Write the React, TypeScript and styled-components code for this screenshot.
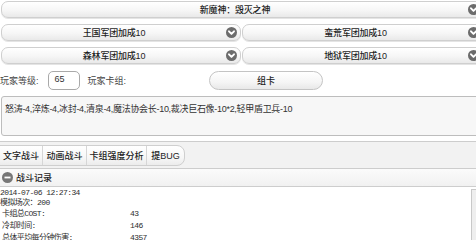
import * as React from "react";
import styled, { createGlobalStyle } from "styled-components";

const GlobalStyle = createGlobalStyle`
  html, body {
    margin: 0;
    padding: 0;
    background: #ffffff;
    overflow: hidden;
  }
  body {
    font-family: "Liberation Sans", "Noto Sans CJK SC", sans-serif;
    font-size: 9px;
    color: #222;
  }
`;

const SPage = styled.div`
  width: 482px;
  padding-top: 1px;
  display: flex;
  flex-direction: column;
`;

const SBarGrid = styled.div`
  display: grid;
  grid-template-columns: 240px 241px;
  gap: 6px 1px;
  margin-left: 1px;
`;

const SBar = styled.div<{ wide?: boolean }>`
  grid-column: ${({ wide }) => (wide ? "1 / span 2" : "auto")};
  height: 17px;
  box-sizing: border-box;
  display: flex;
  align-items: center;
  padding: 0 3px 0 0;
  border: 1px solid #cfcfcf;
  border-radius: 7px;
  background: linear-gradient(to bottom, #ffffff 0%, #f6f6f6 55%, #e9e9e9 100%);
  box-shadow: 0 1px 0 #e4e4e4;
`;

const SBarLabel = styled.div`
  flex: 1;
  text-align: center;
  font-weight: 500;
  color: #1e1e1e;
  letter-spacing: -0.2px;
`;

const SPlayerRow = styled.div`
  display: flex;
  align-items: center;
  height: 19px;
  margin-top: 7px;
`;

const SLabel = styled.span<{ gap: number }>`
  color: #444;
  margin-right: ${({ gap }) => gap}px;
`;

const SLevelInput = styled.div`
  width: 32px;
  height: 19px;
  box-sizing: border-box;
  border: 1px solid #a9a9a9;
  border-radius: 5px;
  padding: 2px 0 0 6px;
  color: #333;
  background: #fff;
  margin-right: 8px;
`;

const SDeckButton = styled.div`
  width: 114px;
  height: 19px;
  box-sizing: border-box;
  margin-left: 83px;
  border: 1px solid #c4c4c4;
  border-radius: 10px;
  background: linear-gradient(to bottom, #ffffff 0%, #f5f5f5 60%, #e8e8e8 100%);
  display: flex;
  align-items: center;
  justify-content: center;
  font-weight: 500;
  color: #1e1e1e;
`;

const SDeckText = styled.div`
  margin: 6px 0 0 1px;
  height: 40px;
  box-sizing: border-box;
  border: 1px solid #bdbdbd;
  border-radius: 3px;
  background: #f7f7f7;
  padding: 5px 0 0 3px;
  color: #333;
  letter-spacing: -0.3px;
  white-space: nowrap;
`;

const STabStrip = styled.div`
  margin-top: 5px;
  height: 28px;
  box-sizing: border-box;
  border-top: 1px solid #cdcdcd;
  border-bottom: 1px solid #cdcdcd;
  background: #f2f2f2;
  display: flex;
  align-items: center;
`;

const STabGroup = styled.div`
  display: flex;
  height: 19px;
  margin-left: -1px;
  border: 1px solid #cfcfcf;
  border-radius: 0 8px 8px 0;
  overflow: hidden;
  background: linear-gradient(to bottom, #ffffff 0%, #f7f7f7 60%, #ececec 100%);
`;

const STab = styled.div<{ w: number }>`
  width: ${({ w }) => w}px;
  box-sizing: border-box;
  display: flex;
  align-items: center;
  justify-content: center;
  font-weight: 500;
  color: #1e1e1e;
  border-right: 1px solid #d6d6d6;
  &:last-child {
    border-right: none;
  }
`;

const SSectionHead = styled.div`
  height: 18px;
  box-sizing: border-box;
  border-bottom: 1px solid #cdcdcd;
  background: linear-gradient(to bottom, #fbfbfb 0%, #f1f1f1 100%);
  display: flex;
  align-items: center;
  padding-left: 2px;
  gap: 3px;
  font-weight: 500;
  color: #1e1e1e;
`;

const SLogArea = styled.div`
  display: flex;
  width: 476px;
`;

const SLog = styled.div`
  flex: 1;
  padding-top: 1px;
  font-family: "Liberation Mono", "Noto Sans CJK SC", monospace;
  font-size: 8px;
  letter-spacing: -0.6px;
  color: #2e2e2e;
`;

const SLogLine = styled.div`
  height: 10px;
  line-height: 10px;
  white-space: nowrap;
`;

const SStatRow = styled.div`
  display: flex;
  height: 12px;
  line-height: 12px;
  padding-left: 2px;
  white-space: nowrap;
`;

const SStatName = styled.span`
  width: 128px;
`;

const SScrollTrack = styled.div`
  width: 4px;
  margin-top: 2px;
  height: 60px;
  border-left: 1px solid #c8c8c8;
  border-top: 1px solid #c8c8c8;
  background: #eeeeee;
`;

function ChevronCircle() {
  return (
    <svg width="11" height="11" viewBox="0 0 11 11">
      <circle cx="5.5" cy="5.5" r="5.5" fill="#6c6c6c" />
      <path d="M3 4.3 L5.5 6.9 L8 4.3" fill="none" stroke="#fff" strokeWidth="1.9" strokeLinecap="round" strokeLinejoin="round" />
    </svg>
  );
}

function MinusCircle() {
  return (
    <svg width="11" height="11" viewBox="0 0 11 11">
      <circle cx="5.5" cy="5.5" r="5.5" fill="#777" />
      <rect x="2.5" y="4.6" width="6" height="1.8" fill="#fff" />
    </svg>
  );
}

const legions = ["王国军团加成10", "蛮荒军团加成10", "森林军团加成10", "地狱军团加成10"];

const tabs = [
  { name: "文字战斗", w: 43 },
  { name: "动画战斗", w: 44 },
  { name: "卡组强度分析", w: 60 },
  { name: "提BUG", w: 37 }
];

const stats = [
  { name: "卡组总COST:", value: "43" },
  { name: "冷却时间:", value: "146" },
  { name: "总体平均每分钟伤害:", value: "4357" }
];

export default function App() {
  return (
    <SPage>
      <GlobalStyle />
      <SBarGrid>
        <SBar wide>
          <SBarLabel>新魔神：毁灭之神</SBarLabel>
          <ChevronCircle />
        </SBar>
        {legions.map(name => (
          <SBar key={name}>
            <SBarLabel>{name}</SBarLabel>
            <ChevronCircle />
          </SBar>
        ))}
      </SBarGrid>

      <SPlayerRow>
        <SLabel gap={9}>玩家等级:</SLabel>
        <SLevelInput>65</SLevelInput>
        <SLabel gap={0}>玩家卡组:</SLabel>
        <SDeckButton>组卡</SDeckButton>
      </SPlayerRow>

      <SDeckText>
        怒涛-4,淬炼-4,冰封-4,清泉-4,魔法协会长-10,裁决巨石像-10*2,轻甲盾卫兵-10
      </SDeckText>

      <STabStrip>
        <STabGroup>
          {tabs.map(t => (
            <STab key={t.name} w={t.w}>
              {t.name}
            </STab>
          ))}
        </STabGroup>
      </STabStrip>

      <SSectionHead>
        <MinusCircle />
        战斗记录
      </SSectionHead>

      <SLogArea>
        <SLog>
          <SLogLine>2014-07-06 12:27:34</SLogLine>
          <SLogLine>模拟场次：200</SLogLine>
          {stats.map(s => (
            <SStatRow key={s.name}>
              <SStatName>{s.name}</SStatName>
              <span>{s.value}</span>
            </SStatRow>
          ))}
        </SLog>
        <SScrollTrack />
      </SLogArea>
    </SPage>
  );
}
